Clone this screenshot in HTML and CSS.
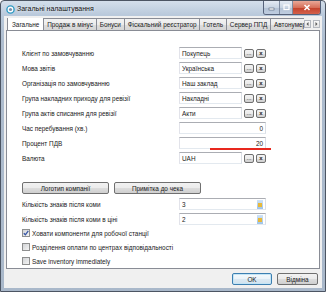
FILE: index.html
```html
<!DOCTYPE html>
<html lang="uk">
<head>
    <meta charset="UTF-8">
    <title>Загальні налаштування</title>
    <link rel="stylesheet" href="styles.css">
</head>
<body>
    <div class="window">
        <!-- Title bar -->
        <div class="titlebar">
            <svg class="app-icon" width="9" height="9" viewBox="0 0 9 9">
                <circle cx="4.5" cy="4.5" r="3.6" fill="#fff" stroke="#2f9bc4" stroke-width="1.4"/>
                <circle cx="4.5" cy="4.5" r="1.6" fill="#7a8ea8"/>
            </svg>
            <span class="title">Загальні налаштування</span>
            <div class="caption">
                <span class="cap min"><svg width="7" height="7"><rect x="1" y="4" width="5" height="2" fill="#fff" stroke="#3b4a60" stroke-width="0.5"/></svg></span>
                <span class="cap max"><svg width="7" height="7"><rect x="1" y="1" width="5" height="4.5" fill="none" stroke="#fff" stroke-width="1.2"/></svg></span>
                <span class="cap close"><svg width="8" height="7"><path d="M1.5 1 L6.5 6 M6.5 1 L1.5 6" stroke="#fff" stroke-width="1.6"/></svg></span>
            </div>
        </div>

        <div class="client">
            <!-- Tabs -->
            <div class="tabstrip">
                <div class="tabs">
                    <span class="tab active">Загальне</span>
                    <span class="tab">Продаж в мінус</span>
                    <span class="tab">Бонуси</span>
                    <span class="tab">Фіскальний реєстратор</span>
                    <span class="tab">Готель</span>
                    <span class="tab">Сервер ППД</span>
                    <span class="tab">Автонумерація</span>
                </div>
                <div class="tab-arrows">
                    <span class="arrow"><svg width="5" height="6"><path d="M3.5 1 L1.5 3 L3.5 5 Z" fill="#555"/></svg></span>
                    <span class="arrow"><svg width="5" height="6"><path d="M1.5 1 L3.5 3 L1.5 5 Z" fill="#555"/></svg></span>
                </div>
            </div>

            <!-- Tab page -->
            <div class="panel">
                <div class="form">
                    <label>Клієнт по замовчуванню</label>
                    <div class="pick"><span class="field">Покупець</span><span class="btn small">...</span><span class="btn small x">x</span></div>

                    <label>Мова звітів</label>
                    <div class="pick"><span class="field">Українська</span><span class="btn small">...</span><span class="btn small x">x</span></div>

                    <label>Організація по замовчуванню</label>
                    <div class="pick"><span class="field">Наш заклад</span><span class="btn small">...</span><span class="btn small x">x</span></div>

                    <label>Група накладних приходу для ревізії</label>
                    <div class="pick"><span class="field">Накладні</span><span class="btn small">...</span><span class="btn small x">x</span></div>

                    <label>Група актів списання для ревізії</label>
                    <div class="pick"><span class="field">Акти</span><span class="btn small">...</span><span class="btn small x">x</span></div>

                    <label>Час перебування (хв.)</label>
                    <span class="field num">0</span>

                    <label>Процент ПДВ</label>
                    <span class="field num">20</span>

                    <label>Валюта</label>
                    <div class="pick"><span class="field">UAH</span><span class="btn small">...</span><span class="btn small x">x</span></div>
                </div>

                <div class="actions">
                    <span class="btn wide">Логотип компанії</span>
                    <span class="btn wide">Примітка до чека</span>
                </div>

                <div class="form digits">
                    <label>Кількість знаків після коми</label>
                    <span class="field spin">3<span class="spin-icon"></span></span>

                    <label>Кількість знаків після коми в ціні</label>
                    <span class="field spin">2<span class="spin-icon"></span></span>
                </div>

                <div class="checks">
                    <div class="check"><span class="box"><svg width="6" height="6"><path d="M0.8 3.2 L2.4 4.8 L5.3 0.9" stroke="#3756a6" stroke-width="1.3" fill="none"/></svg></span>Ховати компоненти для робочої станції</div>
                    <div class="check"><span class="box"></span>Розділення оплати по центрах відповідальності</div>
                    <div class="check"><span class="box"></span>Save inventory immediately</div>
                </div>

                <div class="red-mark"></div>
            </div>

            <!-- Dialog buttons -->
            <div class="footer">
                <span class="btn dlg default">OK</span>
                <span class="btn dlg">Відміна</span>
            </div>
        </div>
    </div>
</body>
</html>
```

FILE: styles.css
```css
html, body {
    margin: 0;
    padding: 0;
}
body {
    width: 326px;
    height: 292px;
    overflow: hidden;
    background: #fff;
    font-family: 'Liberation Sans', Arial, sans-serif;
    font-size: 6.4px;
    color: #1a1a1a;
}
.window {
    box-sizing: border-box;
    width: 326px;
    height: 292px;
    border: 1px solid #4c5563;
    border-radius: 4px 4px 0 0;
    padding: 0 3px 3px 3px;
    background: linear-gradient(#d4dfeb 0px, #b9c9db 14px, #aebdcf 40px, #a9b8ca 100%);
    display: flex;
    flex-direction: column;
}

/* title bar */
.titlebar {
    height: 15px;
    display: flex;
    align-items: flex-start;
}
.app-icon {
    margin: 4px 2px 0 2px;
}
.title {
    margin-top: 4px;
    font-size: 7px;
    color: #111;
    text-shadow: 0 0 3px rgba(255,255,255,0.9);
}
.caption {
    margin-left: auto;
    margin-right: 1px;
    display: flex;
    height: 13px;
    border: 1px solid #56627a;
    border-top: none;
    border-radius: 0 0 3px 3px;
    overflow: hidden;
}
.cap {
    display: flex;
    align-items: center;
    justify-content: center;
    background: linear-gradient(#e3eaf3, #c9d5e3 50%, #b2c1d4 51%, #bfcde0);
}
.cap.min {
    width: 15px;
    border-right: 1px solid #7f8ca1;
}
.cap.max {
    width: 12px;
    border-right: 1px solid #7f8ca1;
}
.cap.close {
    width: 27px;
    background: linear-gradient(#e9a898, #d6705a 50%, #c2402a 51%, #d4614a);
}

/* dialog area */
.client {
    flex: 1;
    background: #f0f0f0;
    display: flex;
    flex-direction: column;
}
.tabstrip {
    display: flex;
    height: 12px;
    margin-top: 2px;
    padding-left: 3px;
    position: relative;
    z-index: 1;
}
.tabs {
    display: flex;
    width: 297px;
    overflow: hidden;
    align-items: flex-end;
}
.tab {
    box-sizing: border-box;
    height: 12px;
    flex: none;
    padding: 0 2.9px;
    margin-left: -1px;
    border: 1px solid #898c95;
    border-bottom: none;
    background: linear-gradient(#f3f3f3, #ebebeb 50%, #dddddd 51%, #d6d6d6);
    display: flex;
    align-items: center;
    white-space: nowrap;
}
.tab.active {
    margin-left: 0;
    height: 14px;
    margin-top: -1px;
    margin-bottom: -1px;
    align-self: flex-start;
    background: #fff;
    padding: 0 4px;
    position: relative;
    z-index: 2;
}
.tab-arrows {
    display: flex;
    gap: 2px;
    margin-top: 2px;
}
.arrow {
    box-sizing: border-box;
    width: 7px;
    height: 8px;
    border: 1px solid #b4b8bf;
    background: linear-gradient(#f8f8f8, #e4e4e4);
    display: flex;
    align-items: center;
    justify-content: center;
}
.panel {
    position: relative;
    flex: 1;
    margin: 0 2px;
    border: 1px solid #898c95;
    background: #fff;
    padding: 16px 0 0 15px;
}

/* form rows */
.form {
    display: grid;
    grid-template-columns: 157px 87px;
    grid-auto-rows: 12px;
    row-gap: 3px;
}
.form label {
    display: flex;
    align-items: center;
}
.pick {
    display: flex;
    gap: 2px;
}
.field {
    box-sizing: border-box;
    flex: 1;
    height: 12px;
    border: 1px solid;
    border-color: #abadb3 #dbdfe6 #e3e9ef #e2e3ea;
    background: #fff;
    padding: 0 2px;
    display: flex;
    align-items: center;
}
.field.num {
    justify-content: flex-end;
}
.spin-icon {
    margin-left: auto;
    width: 6px;
    height: 9px;
    background: linear-gradient(#cfe3f7, #9ec3e8);
    position: relative;
}
.spin-icon::after {
    content: '';
    position: absolute;
    left: 1px;
    top: 3px;
    width: 4px;
    height: 4px;
    background: #e8b93a;
}

/* buttons */
.btn {
    box-sizing: border-box;
    height: 12px;
    border: 1px solid #707070;
    border-radius: 2px;
    background: linear-gradient(#f2f2f2, #ebebeb 50%, #dddddd 51%, #cfcfcf);
    display: flex;
    align-items: center;
    justify-content: center;
    white-space: nowrap;
}
.btn.small {
    width: 10px;
    height: 9px;
    margin-top: 2px;
    font-size: 6px;
    line-height: 1;
    padding-bottom: 2px;
}
.btn.small.x {
    width: 10px;
    font-weight: bold;
    padding-bottom: 1px;
}
.actions {
    display: flex;
    gap: 5px;
    margin-top: 18px;
}
.btn.wide {
    width: 87px;
}
.digits {
    margin-top: 4px;
}

/* checkboxes */
.checks {
    display: flex;
    flex-direction: column;
    gap: 6px;
    margin-top: 4px;
}
.check {
    display: flex;
    align-items: center;
    gap: 2px;
    height: 8px;
}
.box {
    box-sizing: border-box;
    width: 8px;
    height: 8px;
    border: 1px solid #8e8f8f;
    background: linear-gradient(135deg, #d2d4d6, #f4f4f4);
    display: flex;
    align-items: center;
    justify-content: center;
}
.red-mark {
    position: absolute;
    left: 203px;
    top: 117px;
    width: 61px;
    height: 2px;
    background: #e8281e;
}

/* dialog buttons */
.footer {
    height: 19px;
    display: flex;
    justify-content: flex-end;
    align-items: flex-start;
    gap: 5px;
    padding: 4px 4px 0 0;
    box-sizing: border-box;
}
.btn.dlg {
    width: 41px;
}
.btn.default {
    width: 40px;
    border-color: #3c7fb1;
    box-shadow: inset 0 0 0 1px #c4e5f6;
    background: linear-gradient(#f4f9fc, #eaf3f9 50%, #dbe9f3 51%, #d1e2ee);
}
```
